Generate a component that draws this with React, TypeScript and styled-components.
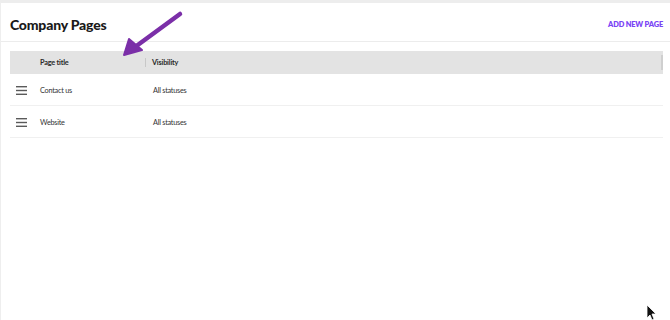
import React from "react";
import styled, { createGlobalStyle } from "styled-components";

const GlobalStyle = createGlobalStyle`
  html, body {
    margin: 0;
    padding: 0;
    background: #ffffff;
    font-family: Lato, "Open Sans", sans-serif;
    color: #222;
  }
`;

const Page = styled.div`
  position: relative;
  width: 670px;
  height: 320px;
  box-sizing: border-box;
  border-top: 3px solid #ededed;
  border-left: 1px solid #eeeeee;
  overflow: hidden;
`;

const TopBar = styled.div`
  display: flex;
  align-items: center;
  justify-content: space-between;
  box-sizing: border-box;
  height: 39px;
  padding: 4px 7px 0 9px;
  border-bottom: 1px solid #ececec;
`;

const Title = styled.h1`
  margin: 0;
  font-size: 14px;
  font-weight: 900;
  letter-spacing: -0.2px;
  color: #1a1a1a;
`;

const AddButton = styled.button`
  background: none;
  border: none;
  padding: 0;
  color: #7b45f5;
  font-family: inherit;
  font-size: 7.4px;
  font-weight: 800;
  letter-spacing: -0.15px;
  text-transform: uppercase;
  cursor: pointer;
`;

const Table = styled.div`
  margin: 9px 7px 0 9px;
`;

const HeadRow = styled.div`
  display: grid;
  grid-template-columns: 30px 105px 1fr 2px;
  align-items: center;
  height: 23px;
  background: #e3e3e3;
  font-size: 7.3px;
  font-weight: 700;
  letter-spacing: -0.2px;
  color: #2a2a2a;
`;

const Row = styled.div`
  display: grid;
  grid-template-columns: 30px 113px 1fr;
  align-items: center;
  box-sizing: border-box;
  height: 32px;
  padding-top: 1px;
  border-bottom: 1px solid #f0f0f0;
  font-size: 7.3px;
  letter-spacing: -0.25px;
  color: #333;
`;

const HeadCell = styled.div<{ $divider?: boolean }>`
  display: flex;
  align-items: center;
  height: 100%;
  ${({ $divider }) =>
    $divider &&
    `
    padding-left: 7px;
    position: relative;
    &::before {
      content: "";
      position: absolute;
      left: 0;
      top: 7px;
      height: 9px;
      border-left: 1px solid #c8c8c8;
    }
  `}
`;

const Grip = styled.div`
  display: flex;
  justify-content: flex-start;
  padding-left: 6px;
`;

const ScrollStub = styled.div`
  height: 15px;
  background: #cfcfcf;
`;

const Overlay = styled.svg`
  position: absolute;
  left: 0;
  top: 0;
  pointer-events: none;
`;

const rows = [
  { title: "Contact us", visibility: "All statuses" },
  { title: "Website", visibility: "All statuses" },
];

const MenuIcon = () => (
  <svg width="11" height="9" viewBox="0 0 11 9">
    <rect x="0" y="0" width="11" height="1.4" fill="#5a5a5a" />
    <rect x="0" y="3.8" width="11" height="1.4" fill="#5a5a5a" />
    <rect x="0" y="7.6" width="11" height="1.4" fill="#5a5a5a" />
  </svg>
);

export default function App() {
  return (
    <>
      <GlobalStyle />
      <Page>
        <TopBar>
          <Title>Company Pages</Title>
          <AddButton>Add new page</AddButton>
        </TopBar>
        <Table>
          <HeadRow>
            <div />
            <HeadCell>Page title</HeadCell>
            <HeadCell $divider>Visibility</HeadCell>
            <ScrollStub />
          </HeadRow>
          {rows.map((r) => (
            <Row key={r.title}>
              <Grip>
                <MenuIcon />
              </Grip>
              <div>{r.title}</div>
              <div>{r.visibility}</div>
            </Row>
          ))}
        </Table>
        <Overlay width="670" height="320" viewBox="0 0 670 320">
          <line x1="179" y1="11" x2="134" y2="44" stroke="#7b2fa8" strokeWidth="4.5" strokeLinecap="round" />
          <polygon points="123,52 128,36 141,47" fill="#7b2fa8" stroke="#7b2fa8" strokeWidth="2" strokeLinejoin="round" />
          <path d="M646 302 L646 315 L649 312 L651 317 L653 316 L651 311 L655 311 Z" fill="#111" stroke="#fff" strokeWidth="0.8" />
        </Overlay>
      </Page>
    </>
  );
}
